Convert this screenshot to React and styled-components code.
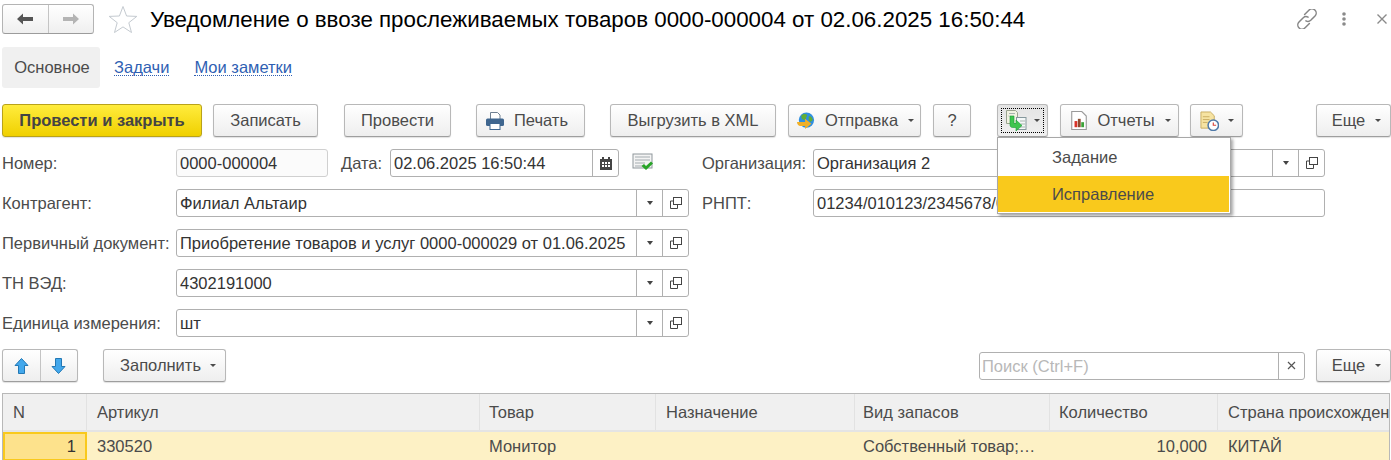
import styled, { createGlobalStyle } from "styled-components";

const GlobalStyle = createGlobalStyle`
  html, body {
    margin: 0;
    padding: 0;
    height: 460px;
    overflow: hidden;
    background: #fff;
    font-family: "Liberation Sans", Arial, sans-serif;
    font-size: 16.5px;
    color: #4b4b4b;
  }
`;

const Page = styled.div`
  width: 1391px;
  height: 460px;
  overflow: hidden;
  position: relative;
`;

const Header = styled.div`
  height: 39px;
  display: flex;
  align-items: center;
  padding: 0 2px;
`;

const NavGroup = styled.div`
  display: flex;
  height: 30px;
  width: 92px;
  margin-top: -1px;
  box-sizing: border-box;
  border: 1px solid #b4b4b4;
  border-bottom-color: #9c9c9c;
  border-radius: 3px;
  background: linear-gradient(#ffffff, #efefef);
`;

const NavCell = styled.div`
  flex: 1;
  display: flex;
  align-items: center;
  justify-content: center;
  & + & {
    border-left: 1px solid #c4c4c4;
  }
`;

const Title = styled.h1`
  margin: 0 0 0 12px;
  font-size: 22.33px;
  font-weight: 400;
  color: #000;
  white-space: nowrap;
`;

const WindowIcons = styled.div`
  margin-left: auto;
  margin-top: -2px;
  display: flex;
  align-items: center;
  padding-right: 1px;
`;

const Tabs = styled.div`
  display: flex;
  align-items: center;
  height: 41px;
  margin: 8px 0 0 2px;
`;

const ActiveTab = styled.div`
  box-sizing: border-box;
  height: 41px;
  width: 98px;
  padding-left: 2px;
  display: flex;
  align-items: center;
  justify-content: center;
  background: #f0f0f0;
  border-radius: 3px;
  color: #4b4b4b;
`;

const TabLink = styled.a`
  margin-left: ${(p) => p.$gap}px;
  color: #2f5fb3;
  border-bottom: 1px dotted #2f5fb3;
  line-height: 16px;
`;

const Toolbar = styled.div`
  display: flex;
  align-items: center;
  height: 33px;
  margin-top: ${(p) => p.$top}px;
  padding-left: 2px;
`;

const Button = styled.div`
  box-sizing: border-box;
  flex: none;
  width: ${(p) => p.$w}px;
  height: 33px;
  margin-left: ${(p) => p.$gap || 0}px;
  padding: 0 ${(p) => p.$pr || 0}px 0 ${(p) => p.$pl || 0}px;
  display: flex;
  align-items: center;
  justify-content: center;
  gap: ${(p) => p.$inner || 0}px;
  border: 1px solid #b8b8b8;
  border-bottom-color: #9e9e9e;
  border-radius: 3px;
  background: linear-gradient(#ffffff, #eeeeee);
  box-shadow: 0 1px 1px rgba(0, 0, 0, 0.12);
  color: #4b4b4b;
  white-space: nowrap;
  position: relative;
`;

const PrimaryButton = styled(Button)`
  border-color: #b9a21a;
  background: linear-gradient(#ffec3d, #f0d000);
  font-weight: 700;
  color: #444;
`;

const PressedButton = styled(Button)`
  background: linear-gradient(#e4e4e4, #f0f0f0);
  &::after {
    content: "";
    position: absolute;
    inset: 3px;
    border: 1px dotted #000;
  }
`;

const Caret = styled.span`
  display: inline-block;
  width: 0;
  height: 0;
  border-left: 3px solid transparent;
  border-right: 3px solid transparent;
  border-top: 3px solid #4b4b4b;
`;

const FieldCaret = styled(Caret)`
  border-top-width: 4px;
  border-top-color: #444;
`;

const ArrowGroup = styled.div`
  box-sizing: border-box;
  display: flex;
  width: 76px;
  height: 33px;
  border: 1px solid #b8b8b8;
  border-bottom-color: #9e9e9e;
  border-radius: 3px;
  background: linear-gradient(#ffffff, #eeeeee);
  box-shadow: 0 1px 1px rgba(0, 0, 0, 0.12);
`;

const Form = styled.div`
  display: grid;
  grid-template-columns: 174px 513px 13px 111px 512px;
  grid-auto-rows: 28px;
  row-gap: 12px;
  align-items: center;
  margin-top: 12px;
  padding-left: 2px;
`;

const Label = styled.div`
  color: #4b4b4b;
  white-space: nowrap;
`;

const Field = styled.div`
  box-sizing: border-box;
  display: flex;
  align-items: stretch;
  height: 28px;
  width: ${(p) => (p.$w ? `${p.$w}px` : "auto")};
  flex: none;
  border: 1px solid ${(p) => (p.$readonly ? "#d0d0d0" : "#b0b0b0")};
  border-radius: 3px;
  background: ${(p) => (p.$readonly ? "#fbfbfb" : "#fff")};
  color: #333;
  line-height: 26px;
`;

const FieldText = styled.div`
  flex: 1;
  padding-left: 3px;
  white-space: nowrap;
  overflow: hidden;
`;

const FieldButton = styled.div`
  flex: none;
  width: 25px;
  display: flex;
  align-items: center;
  justify-content: center;
  border-left: 1px solid #b0b0b0;
  color: #4b4b4b;
`;

const DateRow = styled.div`
  display: flex;
  align-items: center;
`;

const DateLabel = styled(Label)`
  width: 49px;
  margin-left: 13px;
  flex: none;
`;

const StatusIcon = styled.div`
  display: flex;
  margin-left: 13px;
`;

const Menu = styled.div`
  position: absolute;
  left: 997px;
  top: 137px;
  width: 234px;
  height: 77px;
  box-sizing: border-box;
  padding: 1px 1px 1px 0;
  background: #fff;
  border: 1px solid #a8a8a8;
  box-shadow: 2px 2px 3px rgba(0, 0, 0, 0.35);
`;

const MenuItem = styled.div`
  height: ${(p) => p.$h}px;
  line-height: ${(p) => p.$h}px;
  padding-left: 54px;
  background: ${(p) => (p.$active ? "#f9c91c" : "transparent")};
  color: #4b4b4b;
`;

const Spacer = styled.div`
  flex: 1;
`;

const SearchBox = styled(Field)`
  width: 326px;
  margin-right: 11px;
`;

const Placeholder = styled(FieldText)`
  padding-left: 2px;
  color: #b8b8b8;
`;

const Table = styled.div`
  margin: 11px 1px 0 2px;
  border: 1px solid #b8b8b8;
  border-bottom: none;
  height: 67px;
  overflow: hidden;
`;

const TableRow = styled.div`
  display: grid;
  grid-template-columns: 84px 393px 176px 199px 195px 168px 1fr;
  height: ${(p) => p.$h}px;
  background: ${(p) => p.$bg};
  ${(p) => p.$head && "border-bottom: 2px solid #e4e4e4;"}
`;

const Cell = styled.div`
  box-sizing: border-box;
  padding: 0 ${(p) => (p.$right ? 11 : 9)}px 0 ${(p) => p.$pad || 9}px;
  display: flex;
  align-items: center;
  justify-content: ${(p) => (p.$right ? "flex-end" : "flex-start")};
  white-space: nowrap;
  overflow: hidden;
  color: #4b4b4b;
  border-right: ${(p) => (p.$line ? `1px solid ${p.$line}` : "none")};
`;

const IndexCell = styled(Cell)`
  border: 2px solid #f9c91c;
  background: #fde28c;
  padding-right: 9px;
  color: #333;
`;

const columns = [
  { name: "N", pad: 10 },
  { name: "Артикул", pad: 10 },
  { name: "Товар", pad: 9 },
  { name: "Назначение", pad: 10 },
  { name: "Вид запасов", pad: 8 },
  { name: "Количество", pad: 9 },
  { name: "Страна происхожден", pad: 10 },
];

function BackArrow() {
  return (
    <svg width="18" height="14" viewBox="0 0 18 14">
      <path d="M1 7 7 1.500V5h10v4H7v3.500z" fill="#555" />
    </svg>
  );
}

function ForwardArrow() {
  return (
    <svg width="18" height="14" viewBox="0 0 18 14">
      <path d="M17 7 11 1.500V5H1v4h10v3.500z" fill="#b4b4b4" />
    </svg>
  );
}

function Star() {
  return (
    <svg width="30" height="29" viewBox="0 0 30 29" style={{ marginLeft: 14 }}>
      <path d="M15 1.500 18.600 11 28.800 11.400 20.800 17.700 23.500 27.500 15 21.900 6.500 27.500 9.200 17.700 1.200 11.400 11.400 11z" fill="#fff" stroke="#c4cad0" />
    </svg>
  );
}

const LinkSvg = styled.svg`
  margin-right: 24px;
`;

function LinkIcon() {
  return (
    <LinkSvg width="20" height="20" viewBox="2.500 2.500 15 15" fill="none" stroke="#858585" strokeWidth="1.100" strokeLinecap="round">
      <path d="M8.200 6.600 11.400 3.400a3 3 0 0 1 4.600 4.400l-3.200 3.200a3 3 0 0 1-3.600.4" />
      <path d="M11.800 13.400 8.600 16.600a3 3 0 0 1-4.600-4.400l3.200-3.200a3 3 0 0 1 3.600-.4" />
    </LinkSvg>
  );
}

const MoreSvg = styled.svg`
  margin-right: 29px;
`;

function MoreIcon() {
  return (
    <MoreSvg width="6" height="16" viewBox="0 0 6 16">
      <circle cx="3" cy="3" r="1.800" fill="#8a8a8a" />
      <circle cx="3" cy="8" r="1.800" fill="#8a8a8a" />
      <circle cx="3" cy="13" r="1.800" fill="#8a8a8a" />
    </MoreSvg>
  );
}

function CloseIcon() {
  return (
    <svg width="12" height="12" viewBox="0 0 12 12">
      <path d="M1.500 1.500l9 9M10.500 1.500l-9 9" stroke="#8a8a8a" strokeWidth="1.400" />
    </svg>
  );
}

function PrinterIcon() {
  return (
    <svg width="18" height="18" viewBox="0 0 18 18">
      <path d="M4.500.5h7l2.500 2.500v5H4.500z" fill="#fff" stroke="#6f8092" />
      <rect x="0" y="6.500" width="18" height="7.500" rx="1.500" fill="#3f668f" />
      <rect x="4" y="11.500" width="10" height="6" fill="#fff" stroke="#3f668f" />
    </svg>
  );
}

function GlobeIcon() {
  return (
    <svg width="18" height="18" viewBox="0 0 20 20">
      <circle cx="10.500" cy="9" r="8.500" fill="#2f8fe0" />
      <path d="M5 3.500c2-1.500 5-2 6-.5s-1 2-1 4-3 2-4 1-1.500-3-1-4.500zM13 5c2-1 4 1 4.500 4l-2.500 2-2-2z" fill="#62ad35" />
      <path d="M0 11h9V7.500l7 5.500-7 6v-3.500H4c-2.500 0-4-2-4-4.500z" fill="#f0b028" />
    </svg>
  );
}

function SwitchIcon() {
  return (
    <svg width="22" height="21" viewBox="0 0 22 21">
      <path d="M1.500.5h9l2 2v11h-11z" fill="#f1f2e2" stroke="#9aa48e" />
      <rect x="11.500" y="7.500" width="9.500" height="12" fill="#f4f8f8" stroke="#85979c" />
      <path d="M15 11h5M16 14h4M15 17h5M4 3.500h6M3.500 6h1" stroke="#a9b4b0" />
      <path d="M5 6h4v7.500h2V10l6 5.500-6 5.500v-3.500H7.500C6 17.500 5 16.500 5 15z" fill="#3ec54f" stroke="#1d9a3a" strokeWidth=".6" />
    </svg>
  );
}

function ReportIcon() {
  return (
    <svg width="16" height="19" viewBox="0 0 14 17">
      <path d="M.5.500h9l4 4v12H.5z" fill="#fff" stroke="#9a9a9a" />
      <rect x="3" y="9" width="2.500" height="5.500" fill="#d8342a" />
      <rect x="6" y="7" width="2.500" height="7.500" fill="#8d4b2f" />
      <rect x="9" y="10" width="2.500" height="4.500" fill="#3da33a" />
    </svg>
  );
}

function ScheduleIcon() {
  return (
    <svg width="19" height="20" viewBox="0 0 20 21">
      <path d="M1 1h10l4 4v13H1z" fill="#f6e3a2" stroke="#c9ad62" />
      <path d="M3 6h7M3 9h7M3 12h5" stroke="#c9ad62" />
      <circle cx="14" cy="15" r="5.500" fill="#fff" stroke="#4f79a8" strokeWidth="1.600" />
      <path d="M14 12v3h3" fill="none" stroke="#d8443a" strokeWidth="1.200" />
    </svg>
  );
}

function CalendarIcon() {
  return (
    <svg width="12" height="13" viewBox="0 0 12 13">
      <path d="M0 2h2V0h2v2h4V0h2v2h2v11H0z" fill="#444" />
      <path d="M2 5h2v2H2zM5 5h2v2H5zM8 5h2v2H8zM2 8h2v2H2zM5 8h2v2H5zM8 8h2v2H8z" fill="#fff" />
    </svg>
  );
}

function PostedIcon() {
  return (
    <svg width="22" height="20" viewBox="0 0 22 20">
      <rect x="1" y="1" width="19" height="14" fill="#f4f4f4" stroke="#8f979c" />
      <path d="M3 4h15M3 7h15M3 10h10M3 13h8" stroke="#a4acb0" />
      <path d="M9.500 13 12 11l2 2 5-4.500 2 2L14 17z" fill="#28a428" />
    </svg>
  );
}

function OpenIcon() {
  return (
    <svg width="12" height="12" viewBox="0 0 12 12" fill="none" stroke="#444">
      <rect x="3.500" y="0.500" width="8" height="7" fill="#fff" />
      <path d="M3.500 4H.5v7.500h7V8" />
    </svg>
  );
}

function UpArrow() {
  return (
    <svg width="15" height="16" viewBox="0 0 14 16">
      <path d="M7 .5 13.500 7.500H10V15.500H4V7.500H.5z" fill="#43a8ec" stroke="#2378b4" />
    </svg>
  );
}

function DownArrow() {
  return (
    <svg width="15" height="16" viewBox="0 0 14 16">
      <path d="M7 15.500 13.500 8.500H10V.5H4V8.500H.5z" fill="#43a8ec" stroke="#2378b4" />
    </svg>
  );
}

function RefField({ children }) {
  return (
    <Field>
      <FieldText>{children}</FieldText>
      <FieldButton>
        <FieldCaret />
      </FieldButton>
      <FieldButton>
        <OpenIcon />
      </FieldButton>
    </Field>
  );
}

export default function App() {
  return (
    <Page>
      <GlobalStyle />
      <Header>
        <NavGroup>
          <NavCell>
            <BackArrow />
          </NavCell>
          <NavCell>
            <ForwardArrow />
          </NavCell>
        </NavGroup>
        <Star />
        <Title>Уведомление о ввозе прослеживаемых товаров 0000-000004 от 02.06.2025 16:50:44</Title>
        <WindowIcons>
          <LinkIcon />
          <MoreIcon />
          <CloseIcon />
        </WindowIcons>
      </Header>

      <Tabs>
        <ActiveTab>Основное</ActiveTab>
        <TabLink $gap={14}>Задачи</TabLink>
        <TabLink $gap={25}>Мои заметки</TabLink>
      </Tabs>

      <Toolbar $top={16}>
        <PrimaryButton $w={200}>Провести и закрыть</PrimaryButton>
        <Button $w={105} $gap={11}>Записать</Button>
        <Button $w={107} $gap={26}>Провести</Button>
        <Button $w={109} $gap={25} $inner={10} $pr={7}>
          <PrinterIcon />
          Печать
        </Button>
        <Button $w={166} $gap={25}>Выгрузить в XML</Button>
        <Button $w={133} $gap={12} $inner={10} $pl={2}>
          <GlobeIcon />
          Отправка
          <Caret />
        </Button>
        <Button $w={38} $gap={12}>?</Button>
        <PressedButton $w={51} $gap={26} $inner={7}>
          <SwitchIcon />
          <Caret />
        </PressedButton>
        <Button $w={119} $gap={12} $inner={10} $pl={3}>
          <ReportIcon />
          Отчеты
          <Caret />
        </Button>
        <Button $w={53} $gap={11} $inner={9}>
          <ScheduleIcon />
          <Caret />
        </Button>
        <Button $w={75} $gap={73} $inner={10} $pl={6}>
          Еще
          <Caret />
        </Button>
      </Toolbar>

      <Form>
        <Label>Номер:</Label>
        <DateRow>
          <Field $w={152} $readonly>
            <FieldText>0000-000004</FieldText>
          </Field>
          <DateLabel>Дата:</DateLabel>
          <Field $w={229}>
            <FieldText>02.06.2025 16:50:44</FieldText>
            <FieldButton>
              <CalendarIcon />
            </FieldButton>
          </Field>
          <StatusIcon>
            <PostedIcon />
          </StatusIcon>
        </DateRow>
        <span />
        <Label>Организация:</Label>
        <RefField>Организация 2</RefField>

        <Label>Контрагент:</Label>
        <RefField>Филиал Альтаир</RefField>
        <span />
        <Label>РНПТ:</Label>
        <Field>
          <FieldText>01234/010123/2345678/0</FieldText>
        </Field>

        <Label>Первичный документ:</Label>
        <RefField>Приобретение товаров и услуг 0000-000029 от 01.06.2025</RefField>
        <span />
        <span />
        <span />

        <Label>ТН ВЭД:</Label>
        <RefField>4302191000</RefField>
        <span />
        <span />
        <span />

        <Label>Единица измерения:</Label>
        <RefField>шт</RefField>
      </Form>

      <Toolbar $top={12}>
        <ArrowGroup>
          <NavCell>
            <UpArrow />
          </NavCell>
          <NavCell>
            <DownArrow />
          </NavCell>
        </ArrowGroup>
        <Button $w={123} $gap={25} $inner={9} $pl={7}>
          Заполнить
          <Caret />
        </Button>
        <Spacer />
        <SearchBox>
          <Placeholder>Поиск (Ctrl+F)</Placeholder>
          <FieldButton>
            <svg width="9" height="9" viewBox="0 0 9 9">
              <path d="M1 1l7 7M8 1 1 8" stroke="#555" strokeWidth="1.200" />
            </svg>
          </FieldButton>
        </SearchBox>
        <Button $w={75} $inner={10} $pl={6}>
          Еще
          <Caret />
        </Button>
      </Toolbar>

      <Table>
        <TableRow $h={36} $bg="#f0f0f0" $head>
          {columns.map((col, i) => (
            <Cell key={col.name} $pad={col.pad} $line={i < columns.length - 1 ? "#e2e2e2" : null}>
              {col.name}
            </Cell>
          ))}
        </TableRow>
        <TableRow $h={29} $bg="#fdf1c5">
          <IndexCell $right>1</IndexCell>
          <Cell $pad={10}>330520</Cell>
          <Cell>Монитор</Cell>
          <Cell />
          <Cell $pad={8}>Собственный товар;…</Cell>
          <Cell $right>10,000</Cell>
          <Cell $pad={10}>КИТАЙ</Cell>
        </TableRow>
      </Table>

      <Menu>
        <MenuItem $h={37}>Задание</MenuItem>
        <MenuItem $h={36} $active>
          Исправление
        </MenuItem>
      </Menu>
    </Page>
  );
}
